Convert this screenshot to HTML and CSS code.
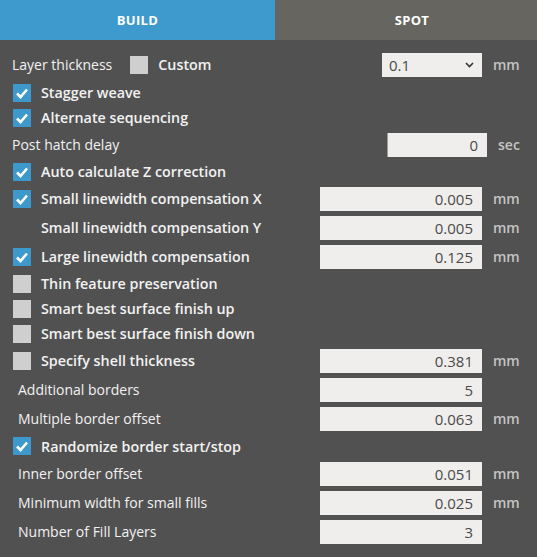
FILE: index.html
```html
<!DOCTYPE html>
<html>
<head>
<meta charset="utf-8">
<link rel="stylesheet" href="styles.css">
</head>
<body>
<div class="panel">
  <div class="tabs">
    <div class="tab tab-active">BUILD</div>
    <div class="tab tab-spot">SPOT</div>
  </div>
  <div class="rows">
    <div class="row row-layer">
      <span class="label plain">Layer thickness</span>
      <span class="box grey"></span>
      <span class="label strong custom">Custom</span>
      <div class="right">
        <div class="select"><span>0.1</span><svg class="chev" width="9" height="6" viewBox="0 0 9 6"><polyline points="1,1 4.5,4.5 8,1" fill="none" stroke="#333" stroke-width="1.6"/></svg></div>
        <span class="unit">mm</span>
      </div>
    </div>
    <div class="row cb"><span class="box on"><svg width="18" height="18" viewBox="0 0 18 18"><polyline points="4,9.5 7.5,13 14,5.5" fill="none" stroke="#fff" stroke-width="2.6"/></svg></span><span class="label strong">Stagger weave</span></div>
    <div class="row cb"><span class="box on"><svg width="18" height="18" viewBox="0 0 18 18"><polyline points="4,9.5 7.5,13 14,5.5" fill="none" stroke="#fff" stroke-width="2.6"/></svg></span><span class="label strong">Alternate sequencing</span></div>
    <div class="row inp">
      <span class="label plain">Post hatch delay</span>
      <div class="right"><div class="field short">0</div><span class="unit unit-sec">sec</span></div>
    </div>
    <div class="row cb"><span class="box on"><svg width="18" height="18" viewBox="0 0 18 18"><polyline points="4,9.5 7.5,13 14,5.5" fill="none" stroke="#fff" stroke-width="2.6"/></svg></span><span class="label strong">Auto calculate Z correction</span></div>
    <div class="row inp cbi"><span class="box on"><svg width="18" height="18" viewBox="0 0 18 18"><polyline points="4,9.5 7.5,13 14,5.5" fill="none" stroke="#fff" stroke-width="2.6"/></svg></span><span class="label strong">Small linewidth compensation X</span>
      <div class="right"><div class="field">0.005</div><span class="unit">mm</span></div></div>
    <div class="row inp cbi"><span class="box none"></span><span class="label strong">Small linewidth compensation Y</span>
      <div class="right"><div class="field">0.005</div><span class="unit">mm</span></div></div>
    <div class="row inp cbi"><span class="box on"><svg width="18" height="18" viewBox="0 0 18 18"><polyline points="4,9.5 7.5,13 14,5.5" fill="none" stroke="#fff" stroke-width="2.6"/></svg></span><span class="label strong">Large linewidth compensation</span>
      <div class="right"><div class="field">0.125</div><span class="unit">mm</span></div></div>
    <div class="row cb"><span class="box grey"></span><span class="label strong">Thin feature preservation</span></div>
    <div class="row cb"><span class="box grey"></span><span class="label strong">Smart best surface finish up</span></div>
    <div class="row cb"><span class="box grey"></span><span class="label strong">Smart best surface finish down</span></div>
    <div class="row inp cbi"><span class="box grey"></span><span class="label strong">Specify shell thickness</span>
      <div class="right"><div class="field">0.381</div><span class="unit">mm</span></div></div>
    <div class="row inp ind"><span class="label plain">Additional borders</span>
      <div class="right"><div class="field">5</div><span class="unit"></span></div></div>
    <div class="row inp ind"><span class="label plain">Multiple border offset</span>
      <div class="right"><div class="field">0.063</div><span class="unit">mm</span></div></div>
    <div class="row cb cb-tall"><span class="box on"><svg width="18" height="18" viewBox="0 0 18 18"><polyline points="4,9.5 7.5,13 14,5.5" fill="none" stroke="#fff" stroke-width="2.6"/></svg></span><span class="label strong">Randomize border start/stop</span></div>
    <div class="row inp ind"><span class="label plain">Inner border offset</span>
      <div class="right"><div class="field">0.051</div><span class="unit">mm</span></div></div>
    <div class="row inp ind"><span class="label plain">Minimum width for small fills</span>
      <div class="right"><div class="field">0.025</div><span class="unit">mm</span></div></div>
    <div class="row inp ind"><span class="label plain">Number of Fill Layers</span>
      <div class="right"><div class="field">3</div><span class="unit"></span></div></div>
  </div>
</div>
</body>
</html>
```

FILE: styles.css
```css
html, body {
  margin: 0;
  padding: 0;
  background: #515151;
}
.panel {
  width: 537px;
  height: 557px;
  background: #515151;
  font-family: "Open Sans", "Noto Sans", sans-serif;
  color: #f2f2f2;
  overflow: hidden;
}
.tabs {
  display: flex;
  height: 40px;
}
.tab {
  display: flex;
  align-items: center;
  justify-content: center;
  font-size: 13px;
  font-weight: 700;
  letter-spacing: 0.3px;
  color: #ffffff;
  padding-bottom: 1px;
  box-sizing: border-box;
}
.tab-active {
  width: 275px;
  background: #3e99cc;
}
.tab-spot {
  flex: 1;
  background: #67655f;
  padding-left: 12px;
}
.rows {
  padding-top: 9px;
}
.row {
  display: flex;
  align-items: center;
  padding-left: 13px;
}
.row-layer {
  height: 31px;
  padding-left: 12px;
}
.cb {
  height: 25px;
}
.cb-tall {
  height: 26px;
}
.inp {
  height: 29px;
  padding-left: 12px;
}
.cbi {
  padding-left: 13px;
}
.ind {
  padding-left: 18px;
}
.label {
  font-size: 14px;
  white-space: nowrap;
}
.plain {
  font-weight: 400;
}
.strong {
  font-weight: 600;
  font-size: 14.3px;
}
.box {
  width: 18px;
  height: 18px;
  flex: none;
  margin-right: 10px;
  display: block;
}
.box svg {
  display: block;
}
.box.on {
  background: #3d98cc;
}
.box.grey {
  background: #cfcfcf;
}
.row-layer .box {
  margin-left: 18px;
}
.right {
  margin-left: auto;
  display: flex;
  align-items: center;
}
.select {
  width: 100px;
  height: 24px;
  box-sizing: border-box;
  background: #efeeec;
  display: flex;
  align-items: center;
  justify-content: space-between;
  padding: 0 8px 0 7px;
  color: #4a4a4a;
  font-size: 15px;
}
.chev {
  display: block;
}
.field {
  width: 162px;
  height: 24px;
  box-sizing: border-box;
  background: #efeeec;
  color: #4a4a4a;
  font-size: 15px;
  text-align: right;
  padding-right: 9px;
  line-height: 24px;
}
.field.short {
  width: 100px;
  border-left: 1px solid #9a9a9a;
}
.unit {
  width: 55px;
  box-sizing: border-box;
  padding-left: 11px;
  color: #c4c4c4;
  font-size: 14px;
  font-weight: 600;
}
.unit-sec {
  width: 50px;
}
```
